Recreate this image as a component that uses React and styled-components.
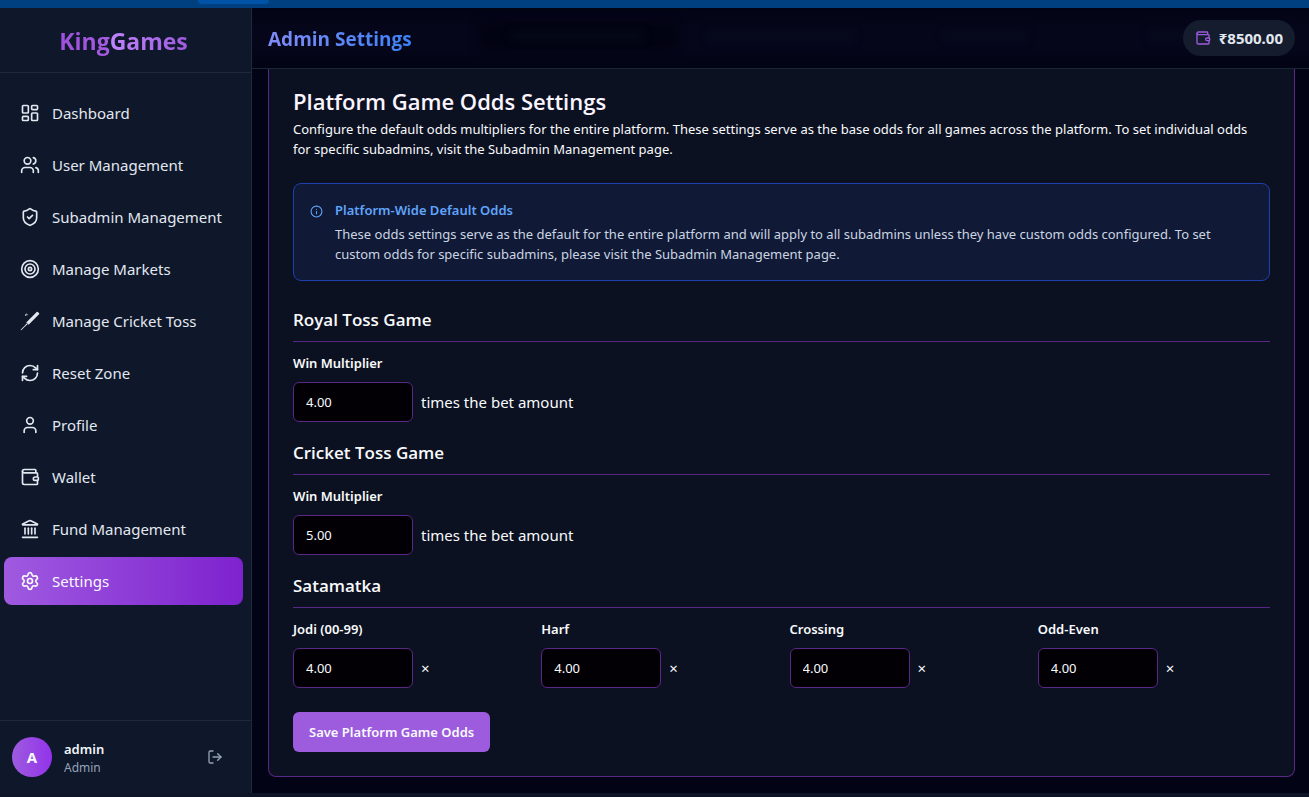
import React from "react";
import styled, { createGlobalStyle, css } from "styled-components";
import {
  LayoutDashboard,
  Users,
  ShieldCheck,
  Target,
  RefreshCw,
  User,
  Wallet,
  Landmark,
  Settings,
  LogOut,
  Info,
} from "lucide-react";
import { GiCricketBat } from "react-icons/gi";

const headingFont = `"Open Sans", "Noto Sans", sans-serif`;
const purpleLine = "#592786";

const GlobalStyle = createGlobalStyle`
  * { box-sizing: border-box; }
  body {
    margin: 0;
    background: #0f172a;
    color: #f8fafc;
    font-family: "Noto Sans", "Open Sans", sans-serif;
    font-size: 15px;
  }
  h1, h2, h3 { font-family: ${headingFont}; }
  button, input { font-family: inherit; }
`;

const Page = styled.div`
  min-height: 100vh;
  display: flex;
  flex-direction: column;
  background: #0d1526;
  padding-bottom: 4px;
`;

const TopStrip = styled.div`
  height: 8px;
  background: #004080;
  padding-left: 198px;
`;

const StripTab = styled.div`
  width: 71px;
  height: 4px;
  background: #0054a8;
  border-radius: 0 0 4px 4px;
`;

const Body = styled.div`
  flex: 1;
  display: flex;
`;

const Sidebar = styled.aside`
  width: 252px;
  flex-shrink: 0;
  display: flex;
  flex-direction: column;
  background: #0f172a;
  border-right: 1px solid #1e293b;
`;

const Brand = styled.div`
  height: 65px;
  display: flex;
  align-items: center;
  justify-content: center;
  padding: 2px 4px 0 0;
  border-bottom: 1px solid #1e293b;
  font-family: ${headingFont};
  font-size: 23px;
  line-height: 32px;
  font-weight: 700;
`;

const BrandPart = styled.span`
  color: transparent;
  background: linear-gradient(90deg, ${(p) => p.$from}, ${(p) => p.$to});
  background-clip: text;
`;

const Nav = styled.nav`
  flex: 1;
  display: flex;
  flex-direction: column;
  gap: 4px;
  padding: 16px 8px 16px 4px;
`;

const NavLink = styled.a`
  display: flex;
  align-items: center;
  gap: 12px;
  height: 48px;
  padding: 0 16px;
  border-radius: 8px;
  color: #e2e8f0;
  font-size: 15px;
  text-decoration: none;
  ${(p) =>
    p.$active &&
    css`
      color: #f8fafc;
      background: linear-gradient(90deg, #9f5ae0, #7e22ce);
    `}
`;

const Account = styled.div`
  display: flex;
  align-items: center;
  gap: 12px;
  padding: 16px 28px 16px 12px;
  border-top: 1px solid #1e293b;
`;

const Avatar = styled.div`
  width: 40px;
  height: 40px;
  display: grid;
  place-items: center;
  border-radius: 50%;
  background: linear-gradient(90deg, #9d5bde, #9333ea);
  font-weight: 700;
`;

const AccountText = styled.div`
  flex: 1;
  display: flex;
  flex-direction: column;
  padding-top: 2px;
`;

const AccountName = styled.span`
  font-size: 13px;
  line-height: 20px;
  font-weight: 600;
  color: #f1f5f9;
`;

const AccountRole = styled.span`
  font-size: 12px;
  line-height: 18px;
  color: #94a3b8;
`;

const IconButton = styled.button`
  display: grid;
  place-items: center;
  padding: 0;
  border: 0;
  background: none;
  color: #94a3b8;
`;

const Content = styled.div`
  flex: 1;
  min-width: 0;
  display: flex;
  flex-direction: column;
  background: #020314;
`;

const Header = styled.header`
  position: relative;
  overflow: hidden;
  height: 61px;
  display: flex;
  align-items: center;
  justify-content: space-between;
  padding: 0 14px 0 16px;
  background: linear-gradient(#020313, #05061a 35%, #05061a 65%, #020313);
  border-bottom: 1px solid #1a2638;
`;

const Haze = styled.span`
  position: absolute;
  top: ${(p) => p.$top}px;
  left: ${(p) => p.$left}px;
  width: ${(p) => p.$width}px;
  height: ${(p) => p.$height}px;
  border-radius: 6px;
  background: ${(p) => p.$color};
  filter: blur(4px);
`;

const PageTitle = styled.h1`
  position: relative;
  margin: 0;
  padding-top: 2px;
  font-size: 19px;
  line-height: 28px;
  font-weight: 700;
  color: transparent;
  background: linear-gradient(90deg, #818cf8, #3b82f6);
  background-clip: text;
`;

const Balance = styled.button`
  position: relative;
  display: flex;
  align-items: center;
  gap: 8px;
  height: 36px;
  padding: 0 12px;
  border: 0;
  border-radius: 18px;
  background: #151c2d;
  color: #e2e8f0;
  font-size: 15px;
  font-weight: 700;
  svg { color: #9d5bde; }
`;

const Main = styled.main`
  flex: 1;
  padding: 0 14px 16px 16px;
`;

const Card = styled.form`
  padding: 20px 24px 24px;
  background: #0c1121;
  border: 1px solid ${purpleLine};
  border-top: 0;
  border-radius: 0 0 8px 8px;
`;

const CardTitle = styled.h2`
  margin: 0 0 6px;
  font-size: 22px;
  line-height: 24px;
  font-weight: 600;
  color: #faf5ff;
`;

const CardText = styled.p`
  margin: 0;
  padding-right: 8px;
  font-size: 13px;
  line-height: 20px;
  color: #f8fafc;
`;

const Notice = styled.section`
  display: flex;
  align-items: flex-start;
  gap: 12px;
  margin: 24px 0;
  padding: 16px;
  border: 1px solid #1e40af;
  border-radius: 8px;
  background: #101936;
  > svg {
    flex-shrink: 0;
    margin-top: 5px;
    color: #60a5fa;
  }
`;

const NoticeTitle = styled.h3`
  margin: 0 0 4px;
  font-family: inherit;
  font-size: 13px;
  line-height: 20px;
  font-weight: 600;
  color: #60a5fa;
`;

const NoticeText = styled.p`
  margin: 0;
  font-size: 13px;
  line-height: 20px;
  color: #cbd5e1;
`;

const Group = styled.section`
  margin-bottom: ${(p) => (p.$last ? 24 : 16)}px;
`;

const GroupTitle = styled.h3`
  margin: 0 0 12px;
  padding-bottom: 6px;
  border-bottom: 1px solid ${purpleLine};
  font-size: 17px;
  line-height: 30px;
  font-weight: 600;
  color: #f8fafc;
`;

const Fields = styled.div`
  display: grid;
  grid-template-columns: repeat(${(p) => p.$columns}, 1fr);
  gap: 16px;
`;

const Label = styled.label`
  display: block;
  margin-bottom: 10px;
  font-size: 13px;
  line-height: 18px;
  font-weight: 600;
`;

const FieldRow = styled.div`
  display: flex;
  align-items: center;
  gap: 8px;
`;

const NumberInput = styled.input`
  width: 120px;
  height: 40px;
  padding: 0 12px;
  border: 1px solid ${purpleLine};
  border-radius: 6px;
  background: #020005;
  color: #f8fafc;
  font-size: 13px;
  appearance: textfield;
  &::-webkit-inner-spin-button { appearance: none; margin: 0; }
`;

const Unit = styled.span`
  font-size: 15px;
  line-height: 24px;
`;

const SaveButton = styled.button`
  height: 40px;
  padding: 0 16px;
  border: 0;
  border-radius: 6px;
  background: #9d5bde;
  color: #f8fafc;
  font-size: 13px;
  font-weight: 600;
`;

const navItems = [
  { label: "Dashboard", icon: LayoutDashboard },
  { label: "User Management", icon: Users },
  { label: "Subadmin Management", icon: ShieldCheck },
  { label: "Manage Markets", icon: Target },
  { label: "Manage Cricket Toss", icon: GiCricketBat },
  { label: "Reset Zone", icon: RefreshCw },
  { label: "Profile", icon: User },
  { label: "Wallet", icon: Wallet },
  { label: "Fund Management", icon: Landmark },
  { label: "Settings", icon: Settings, active: true },
];

const groups = [
  {
    title: "Royal Toss Game",
    unit: "times the bet amount",
    fields: [{ id: "royal", label: "Win Multiplier", value: "4.00" }],
  },
  {
    title: "Cricket Toss Game",
    unit: "times the bet amount",
    fields: [{ id: "cricket", label: "Win Multiplier", value: "5.00" }],
  },
  {
    title: "Satamatka",
    unit: "×",
    fields: [
      { id: "jodi", label: "Jodi (00-99)", value: "4.00" },
      { id: "harf", label: "Harf", value: "4.00" },
      { id: "crossing", label: "Crossing", value: "4.00" },
      { id: "oddeven", label: "Odd-Even", value: "4.00" },
    ],
  },
];

export default function App() {
  return (
    <Page>
      <GlobalStyle />
      <TopStrip>
        <StripTab />
      </TopStrip>
      <Body>
        <Sidebar>
          <Brand>
            <BrandPart $from="#9d50dd" $to="#a45be0">King</BrandPart>
            <BrandPart $from="#c084fc" $to="#9d5bde">Games</BrandPart>
          </Brand>
          <Nav>
            {navItems.map(({ label, icon: Icon, active }) => (
              <NavLink key={label} href="#" $active={active}>
                <Icon size={20} />
                {label}
              </NavLink>
            ))}
          </Nav>
          <Account>
            <Avatar>A</Avatar>
            <AccountText>
              <AccountName>admin</AccountName>
              <AccountRole>Admin</AccountRole>
            </AccountText>
            <IconButton type="button" aria-label="Log out">
              <LogOut size={16} />
            </IconButton>
          </Account>
        </Sidebar>
        <Content>
          <Header>
            <Haze $left={226} $top={14} $width={200} $height={28} $color="#020312" />
            <Haze $left={260} $top={24} $width={132} $height={8} $color="#060a18" />
            <Haze $left={456} $top={24} $width={146} $height={8} $color="#080b1d" />
            <Haze $left={692} $top={24} $width={82} $height={8} $color="#070a1c" />
            <Haze $left={898} $top={24} $width={60} $height={8} $color="#070a1c" />
            <PageTitle>Admin Settings</PageTitle>
            <Balance type="button">
              <Wallet size={16} />
              ₹8500.00
            </Balance>
          </Header>
          <Main>
            <Card>
              <CardTitle>Platform Game Odds Settings</CardTitle>
              <CardText>
                Configure the default odds multipliers for the entire platform. These settings serve as
                the base odds for all games across the platform. To set individual odds for specific
                subadmins, visit the Subadmin Management page.
              </CardText>
              <Notice>
                <Info size={13} />
                <div>
                  <NoticeTitle>Platform-Wide Default Odds</NoticeTitle>
                  <NoticeText>
                    These odds settings serve as the default for the entire platform and will apply to
                    all subadmins unless they have custom odds configured. To set custom odds for
                    specific subadmins, please visit the Subadmin Management page.
                  </NoticeText>
                </div>
              </Notice>
              {groups.map((group, index) => (
                <Group key={group.title} $last={index === groups.length - 1}>
                  <GroupTitle>{group.title}</GroupTitle>
                  <Fields $columns={group.fields.length}>
                    {group.fields.map((field) => (
                      <div key={field.id}>
                        <Label htmlFor={field.id}>{field.label}</Label>
                        <FieldRow>
                          <NumberInput
                            id={field.id}
                            type="number"
                            step="0.01"
                            defaultValue={field.value}
                          />
                          <Unit>{group.unit}</Unit>
                        </FieldRow>
                      </div>
                    ))}
                  </Fields>
                </Group>
              ))}
              <SaveButton type="button">Save Platform Game Odds</SaveButton>
            </Card>
          </Main>
        </Content>
      </Body>
    </Page>
  );
}
